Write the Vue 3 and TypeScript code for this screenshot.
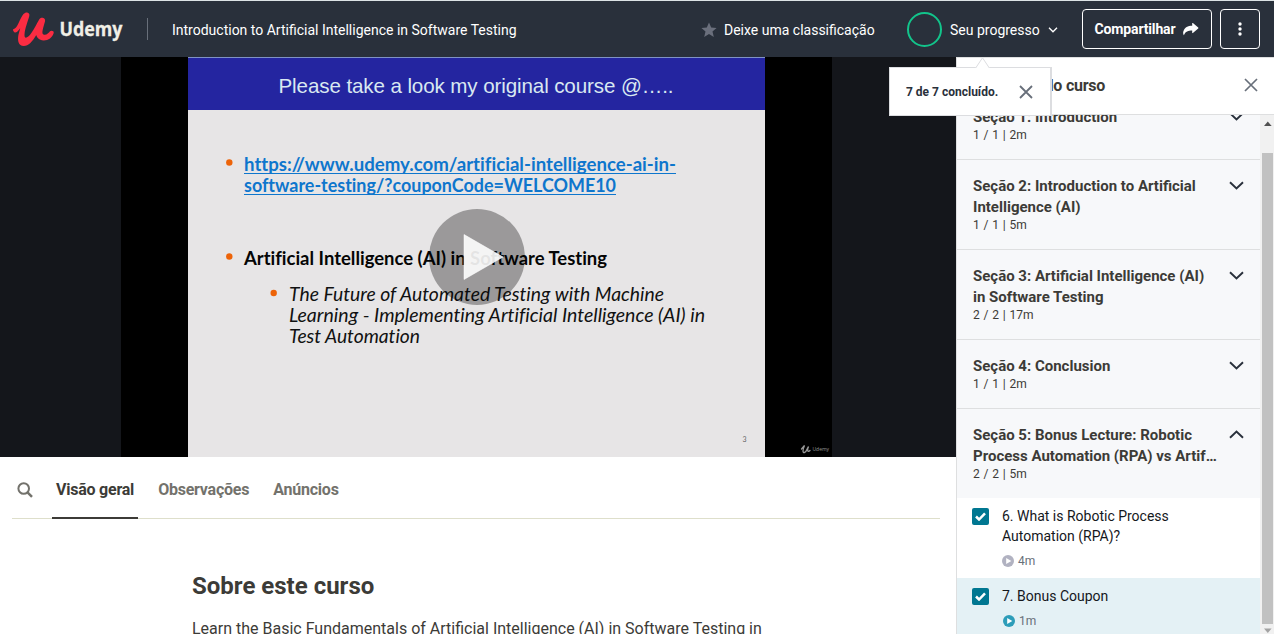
<script setup lang="ts">
interface Section {
  title: string
  meta: string
  open?: boolean
}
interface Lecture {
  title: string
  duration: string
  active?: boolean
}

const sections: Section[] = [
  { title: 'Seção 1: Introduction', meta: '1 / 1 | 2m' },
  { title: 'Seção 2: Introduction to Artificial Intelligence (AI)', meta: '1 / 1 | 5m' },
  { title: 'Seção 3: Artificial Intelligence (AI) in Software Testing', meta: '2 / 2 | 17m' },
  { title: 'Seção 4: Conclusion', meta: '1 / 1 | 2m' },
  { title: 'Seção 5: Bonus Lecture: Robotic Process Automation (RPA) vs Artif…', meta: '2 / 2 | 5m', open: true },
]
const lectures: Lecture[] = [
  { title: '6. What is Robotic Process Automation (RPA)?', duration: '4m' },
  { title: '7. Bonus Coupon', duration: '1m', active: true },
]
const tabs: string[] = ['Visão geral', 'Observações', 'Anúncios']
</script>

<template>
  <div class="page">
    <header class="header">
      <svg class="logo" width="112" height="36" viewBox="12 11 112 36">
        <path fill="#fb2c42" d="M13.200 29.300C18 28.500 19.500 18.500 23.500 14C25.800 11.200 30.300 12.200 29.300 16C28 21 25 28 24.500 34.500C24.300 40 28 37.500 31 33.500C34.500 28.500 37 23 39.500 19C41.500 16.300 46 18 45 21.500C43.500 27 41 33.500 43.500 34.600C46.500 35.500 48.500 33 50 31.300C51.500 30 54.200 31 53.700 33C52.500 37.500 48 40.700 43.500 40.500C39 40.200 36.800 37.500 36.300 35C32.500 41.500 28.500 46 23.800 46C18.300 46 17.400 40.500 18.400 35L20.200 28.300C18 31.500 16 33 14.700 32.500C13.500 32 12.500 29.800 13.200 29.300z" />
        <text x="59.500" y="36" textLength="63" lengthAdjust="spacingAndGlyphs" class="wordmark">Udemy</text>
      </svg>
      <span class="divider"></span>
      <span class="course">Introduction to Artificial Intelligence in Software Testing</span>
      <div class="rating">
        <svg width="16" height="16" viewBox="0 0 16 16"><path fill="#6a6f7c" d="M8 .4l2.200 5 5.400.5-4.100 3.600 1.300 5.400L8 12.100l-4.800 2.800 1.300-5.400L.4 5.900l5.400-.5z" /></svg>
        <span>Deixe uma classificação</span>
      </div>
      <div class="progress">
        <span class="ring"></span>
        <span class="progress-label">Seu progresso</span>
        <svg width="10" height="8" viewBox="0 0 10 8"><path d="M1 1.800l4 4 4-4" fill="none" stroke="#fff" stroke-width="1.300" /></svg>
      </div>
      <button class="btn share">
        <span>Compartilhar</span>
        <svg width="16" height="13" viewBox="0 0 16 13"><path fill="#fff" d="M9.200.3c0-.4.4-.5.700-.2l5.300 4.500c.3.300.3.600 0 .9L9.900 10c-.3.300-.7.100-.7-.3V7.400C5.200 7.400 2.500 8.200.9 12.200.1 11.500-.1 9.900.4 8.300 1.700 4.400 4.800 2.900 9.200 2.800z" /></svg>
      </button>
      <button class="btn more" aria-label="Mais">
        <svg width="4" height="14" viewBox="0 0 4 14" fill="#fff"><circle cx="2" cy="2" r="1.700" /><circle cx="2" cy="7" r="1.700" /><circle cx="2" cy="12" r="1.700" /></svg>
      </button>
      <div class="popover">
        <svg class="arrow" width="16" height="11" viewBox="0 0 16 11"><path d="M0 11L1.500 10.500 7.500.8 13.500 10.500 15 11z" fill="#fff" /><path d="M1 10.500L7.500.8 14 10.500" fill="none" stroke="#dcdde0" /></svg>
        <strong>7 de 7 concluído.</strong>
        <svg width="14" height="14" viewBox="0 0 14 14"><path d="M1 1l12 12M13 1L1 13" stroke="#686f7a" stroke-width="1.800" /></svg>
      </div>
    </header>

    <div class="body">
      <main class="main">
        <div class="player">
          <svg class="frame" width="711" height="400" viewBox="121 57 711 400">
            <rect x="121" y="57" width="711" height="400" fill="#000" />
            <rect x="188" y="57" width="577" height="400" fill="#e7e5e6" />
            <rect x="188" y="57" width="577" height="53" fill="#2425a0" />
            <rect x="188" y="57" width="577" height="1" fill="#7f92c5" />
            <text x="278.500" y="93" textLength="395" class="slide-title">Please take a look my original course @…..</text>
            <g fill="#ed6308"><circle cx="229.300" cy="162.500" r="3.200" /><circle cx="229.300" cy="256.500" r="3.200" /><circle cx="273.700" cy="293" r="3.200" /></g>
            <g class="slide-link">
              <text x="244" y="171" textLength="432" lengthAdjust="spacingAndGlyphs">https://www.udemy.com/artificial-intelligence-ai-in-</text>
              <text x="244" y="192" textLength="372" lengthAdjust="spacingAndGlyphs">software-testing/?couponCode=WELCOME10</text>
              <path d="M244 173.500H676M244 194.500H616" stroke="#0e76cd" stroke-width="1.200" />
            </g>
            <text x="244" y="265" textLength="363" lengthAdjust="spacingAndGlyphs" class="slide-bold">Artificial Intelligence (AI) in Software Testing</text>
            <g class="slide-italic">
              <text x="289" y="301" textLength="375" lengthAdjust="spacingAndGlyphs">The Future of Automated Testing with Machine</text>
              <text x="289" y="322" textLength="416" lengthAdjust="spacingAndGlyphs">Learning - Implementing Artificial Intelligence (AI) in</text>
              <text x="289" y="343" textLength="131" lengthAdjust="spacingAndGlyphs">Test Automation</text>
            </g>
            <text x="742.500" y="441.500" class="slide-number">3</text>
            <path d="M801.500 449L804.500 445.500C802.500 450 802.500 453 804.500 452.500 806.500 452 807.500 448 808.500 446.500 807 450 807.500 453 810 450.500" fill="none" stroke="#999" stroke-linecap="round" stroke-width="1.300" />
            <text x="812.500" y="451" textLength="16.500" lengthAdjust="spacingAndGlyphs" class="watermark">Udemy</text>
            <circle cx="477" cy="257" r="48" fill="#000" fill-opacity=".33" />
            <path d="M464 234.500L503 257 464 279.500z" fill="#fff" fill-opacity=".85" stroke="#fff" stroke-opacity=".5" stroke-linejoin="round" />
            <path d="M464 234.500L503 257 464 279.500z" fill="#fff" fill-opacity=".3" />
          </svg>
        </div>
        <nav class="tabs">
          <svg class="search" width="16" height="16" viewBox="0 0 16 16" fill="none" stroke="#73726c" stroke-width="2"><circle cx="6.700" cy="6.500" r="5.300" /><path d="M10.500 10.300l4.500 4.500" stroke-width="2.400" /></svg>
          <span v-for="(tab, i) in tabs" :key="tab" class="tab" :class="{ current: i === 0 }">{{ tab }}</span>
        </nav>
        <section class="about">
          <h2>Sobre este curso</h2>
          <p>Learn the Basic Fundamentals of Artificial Intelligence (AI) in Software Testing in</p>
        </section>
      </main>

      <aside class="sidebar">
        <div class="side-head">
          <span>Conteúdo do curso</span>
          <svg width="14" height="14" viewBox="0 0 14 14"><path d="M1 1l12 12M13 1L1 13" stroke="#686f7a" stroke-width="1.700" /></svg>
        </div>
        <div class="side-body">
          <div class="list">
            <div v-for="s in sections" :key="s.title" class="section" :class="{ open: s.open }">
              <div class="section-text">
                <div class="section-title">{{ s.title }}</div>
                <div class="section-meta">{{ s.meta }}</div>
              </div>
              <svg class="chevron" width="15" height="9" viewBox="0 0 15 9"><path :d="s.open ? 'M1 7.800l6.500-6.300L14 7.800' : 'M1 1.200l6.500 6.300L14 1.200'" fill="none" stroke="#29303b" stroke-width="1.900" /></svg>
            </div>
            <div v-for="l in lectures" :key="l.title" class="lecture" :class="{ active: l.active }">
              <span class="check">
                <svg width="11" height="9" viewBox="0 0 11 9"><path d="M1 4.500l3 3L10 1.300" fill="none" stroke="#fff" stroke-width="2.500" /></svg>
              </span>
              <div class="lecture-text">
                <div class="lecture-title">{{ l.title }}</div>
                <div class="lecture-meta">
                  <svg width="12" height="12" viewBox="0 0 12 12"><circle cx="6" cy="6" r="6" class="play-disc" /><path d="M4.200 2.900L9.300 6 4.200 9.100z" fill="#fff" /></svg>
                  <span>{{ l.duration }}</span>
                </div>
              </div>
            </div>
          </div>
          <div class="scrollbar">
            <svg width="12" height="7" viewBox="0 0 12 7"><path d="M2 6L5.800 1.500 9.600 6z" fill="#505050" /></svg>
            <span class="thumb"></span>
            <svg width="12" height="7" viewBox="0 0 12 7"><path d="M2 1.500L9.600 1.500 5.800 6z" fill="#a3a3a3" /></svg>
          </div>
        </div>
      </aside>
    </div>
  </div>
</template>

<style>
html,
body {
  overflow: hidden;
}
</style>

<style scoped>
.page {
  width: 1274px;
  height: 634px;
  overflow: hidden;
  background: #fff;
  font-family: Roboto, 'Liberation Sans', sans-serif;
  color: #3c3b37;
}
.page * {
  box-sizing: border-box;
}
svg {
  display: block;
  flex: none;
}
.header {
  position: relative;
  z-index: 2;
  display: flex;
  align-items: center;
  height: 57px;
  padding: 0 14px 0 12px;
  border-top: 1px solid #dce3e5;
  background: #29303b;
  color: #fff;
  font-size: 14px;
  white-space: nowrap;
}
.course,
.rating,
.progress {
  padding-top: 1px;
}
.wordmark {
  font: 700 20px 'Open Sans', sans-serif;
  fill: #f0efe6;
  stroke: #f0efe6;
  stroke-width: 0.3px;
}
.divider {
  width: 1px;
  height: 22px;
  margin-left: 23px;
  background: #686f7a;
}
.course {
  margin-left: 24px;
  width: 529px;
}
.rating {
  display: flex;
  align-items: center;
  gap: 7px;
  width: 206px;
}
.progress {
  display: flex;
  align-items: center;
  width: 175px;
}
.ring {
  width: 35px;
  height: 35px;
  border: 2px solid #12c48b;
  border-radius: 50%;
}
.progress-label {
  margin: 0 8px;
}
.btn {
  display: flex;
  align-items: center;
  justify-content: center;
  height: 40px;
  padding: 0;
  border: 1px solid #fff;
  border-radius: 4px;
  background: transparent;
  color: #fff;
  font: 700 14px Roboto, sans-serif;
}
.share {
  width: 130px;
  gap: 8px;
  letter-spacing: -0.15px;
}
.more {
  width: 40px;
  margin-left: 8px;
}
.popover {
  position: absolute;
  left: 889px;
  top: 66px;
  display: flex;
  align-items: center;
  width: 163px;
  height: 49px;
  padding: 0 17px 0 16px;
  justify-content: space-between;
  border: 1px solid #dcdde0;
  border-right-width: 2px;
  background: #fff;
  color: #29303b;
  font-size: 12px;
}
.arrow {
  position: absolute;
  left: 85px;
  top: -11px;
}
.body {
  display: flex;
  height: 577px;
}
.main {
  width: 956px;
}
.player {
  display: flex;
  justify-content: center;
  height: 400px;
  padding-right: 3px;
  background: #14161b;
}
.frame {
  font-variant-ligatures: none;
}
.slide-title {
  font-family: 'Liberation Sans', sans-serif;
  font-size: 20.6px;
  fill: #d9e8f1;
}
.slide-link,
.slide-bold {
  font-family: Lato, sans-serif;
  font-size: 18.5px;
  font-weight: 700;
  fill: #050505;
}
.slide-link {
  fill: #0e76cd;
}
.slide-italic {
  font-family: Lato, sans-serif;
  font-size: 18.5px;
  font-style: italic;
  fill: #111;
}
.slide-number {
  font-family: Lato, sans-serif;
  font-size: 7px;
  fill: #666;
}
.watermark {
  font-family: 'Open Sans', sans-serif;
  font-size: 6px;
  fill: #999;
}
.tabs {
  display: flex;
  height: 62px;
  margin: 0 16px 0 12px;
  padding-left: 5px;
  border-bottom: 1px solid #dedfcb;
  font-size: 16px;
  font-weight: 700;
  line-height: 19px;
  letter-spacing: -0.23px;
}
.search {
  margin: 25px 19px 0 0;
}
.tab {
  height: 62px;
  padding: 23px 4px 0;
  margin-right: 16px;
  color: #73726c;
}
.current {
  border-bottom: 2px solid #3c3b37;
  color: #3c3b37;
}
.about {
  padding: 50px 0 0 192px;
}
.about h2 {
  margin: 0;
  font-size: 24px;
  font-weight: 700;
  line-height: 34px;
}
.about p {
  margin: 14px 0 0;
  font-size: 16px;
  line-height: 24px;
  white-space: nowrap;
}
.sidebar {
  width: 318px;
  border-left: 1px solid #dedfe0;
}
.side-head {
  display: flex;
  align-items: center;
  justify-content: space-between;
  height: 58px;
  padding: 0 16px 2px;
  border-top: 1px solid #dedfe0;
  border-bottom: 1px solid #dedfe0;
  background: #fff;
  font-size: 16px;
  font-weight: 700;
  letter-spacing: -0.22px;
}
.side-body {
  display: flex;
  height: 519px;
}
.list {
  width: 303px;
  overflow: hidden;
}
.section:first-child {
  margin-top: -24px;
}
.section {
  display: flex;
  justify-content: space-between;
  padding: 16px;
  border-bottom: 1px solid #dedfe0;
  background: #f7f8fa;
}
.section.open {
  border-bottom: 0;
}
.section-text {
  width: 245px;
}
.section-title {
  font-size: 15px;
  font-weight: 700;
  line-height: 21px;
}
.section-meta {
  font-size: 12px;
  line-height: 15px;
  word-spacing: 0.8px;
}
.chevron {
  margin-top: 5px;
}
.lecture {
  display: flex;
  padding: 8px 16px 8px 15px;
}
.active {
  background: #e4f1f5;
}
.check {
  display: flex;
  align-items: center;
  justify-content: center;
  flex: none;
  width: 17px;
  height: 17px;
  margin: 2px 13px 0 0;
  border-radius: 2px;
  background: #007791;
}
.lecture-text {
  width: 200px;
}
.lecture-title {
  color: #14171c;
  font-size: 14px;
  line-height: 20px;
}
.lecture-meta {
  display: flex;
  align-items: center;
  gap: 4px;
  height: 24px;
  padding-top: 6px;
  color: #686f7a;
  font-size: 12px;
}
.active .lecture-meta {
  padding-left: 1px;
}
.play-disc {
  fill: #b1b2c1;
}
.active .play-disc {
  fill: #2d9db9;
}
.scrollbar {
  display: flex;
  flex-direction: column;
  width: 14px;
  padding: 5px 0 0 2px;
  background: #f1f1f1;
}
.thumb {
  width: 11px;
  height: 471px;
  margin: 26px 0 3px;
  background: #c1c1c1;
}
</style>
